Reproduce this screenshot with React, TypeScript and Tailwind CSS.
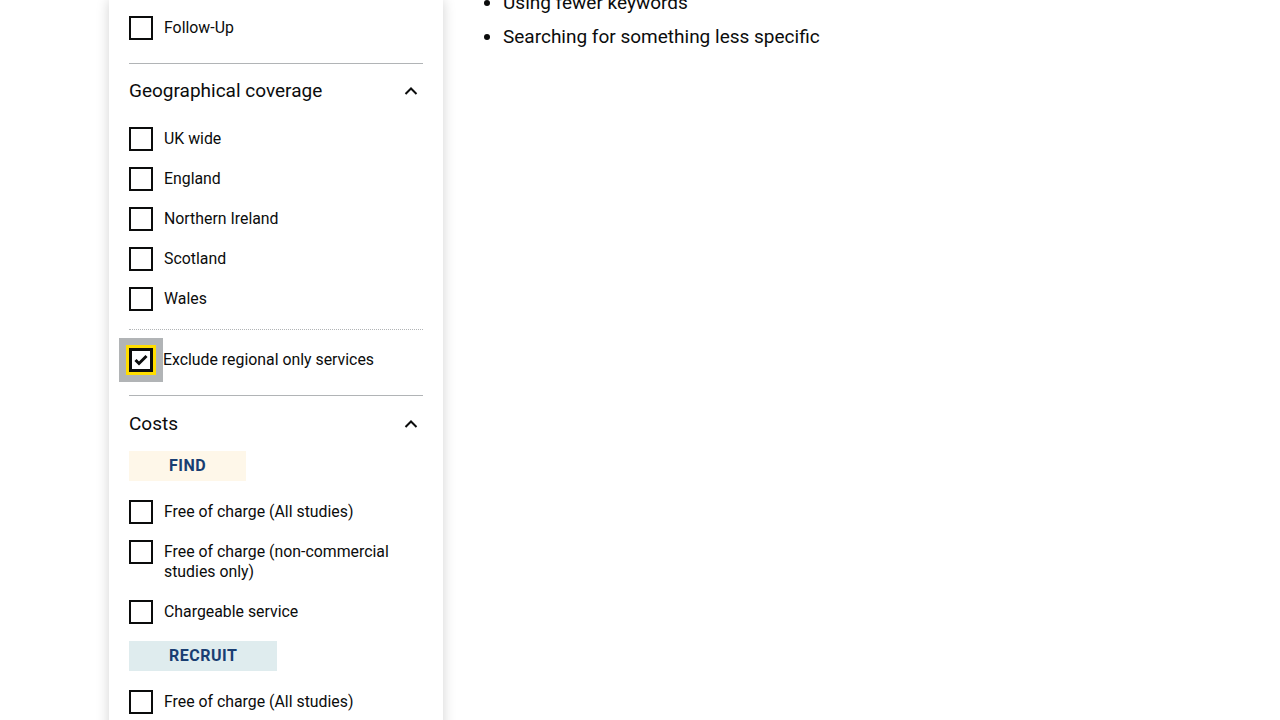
import React from "react";

const font = { fontFamily: "Roboto, 'Liberation Sans', sans-serif" };

const Box = ({ label }: { label: string }) => (
  <label className="flex items-start gap-[11px] text-[15.85px] leading-[20px] text-[#0b0c0c]">
    <span className="block w-6 h-6 flex-shrink-0 border-2 border-[#0b0c0c] bg-white" />
    <span className="pt-[2px] pb-[2px]">{label}</span>
  </label>
);

const Chevron = () => (
  <svg width="18" height="18" viewBox="0 0 18 18" className="mr-[3px]">
    <path d="M3.5 12 L9 6.5 L14.5 12" fill="none" stroke="#0b0c0c" strokeWidth="2" />
  </svg>
);

const Heading = ({ title }: { title: string }) => (
  <div className="flex items-center justify-between text-[19px] leading-[28px] text-[#0b0c0c]">
    <span>{title}</span>
    <Chevron />
  </div>
);

const Tag = ({ text, bg }: { text: string; bg: string }) => (
  <div className={`${bg} h-[30px] flex items-center px-10 self-start font-bold text-[16px] tracking-[0.5px] text-[#193e72]`}>
    {text}
  </div>
);

export default function App() {
  return (
    <div className="min-h-screen bg-white flex" style={font}>
      <aside className="ml-[109px] w-[334px] flex-shrink-0 bg-white shadow-[0_0_12px_rgba(0,0,0,0.18)] px-5 pt-4 pb-10">
        <Box label="Follow-Up" />
        <div className="mt-[23px] border-t border-[#b1b4b6]" />

        <div className="mt-[13px]">
          <Heading title="Geographical coverage" />
        </div>
        <div className="mt-[22px] flex flex-col gap-4">
          {["UK wide", "England", "Northern Ireland", "Scotland", "Wales"].map((l) => (
            <Box key={l} label={l} />
          ))}
        </div>
        <div className="mt-[18px] border-t border-dotted border-[#b1b4b6]" />

        <div className="mt-2 flex items-center">
          <div className="-ml-[10px] w-11 h-11 bg-[#b1b4b6] flex items-center justify-center flex-shrink-0">
            <span className="w-6 h-6 border-[3px] border-[#0b0c0c] bg-white ring-[3px] ring-[#ffdd00] flex items-center justify-center">
              <svg width="14" height="12" viewBox="0 0 14 12">
                <path d="M1.5 6 L5 9.5 L12.5 2" fill="none" stroke="#0b0c0c" strokeWidth="3" />
              </svg>
            </span>
          </div>
          <span className="text-[15.85px] leading-[20px] text-[#0b0c0c]">Exclude regional only services</span>
        </div>
        <div className="mt-[13px] border-t border-[#b1b4b6]" />

        <div className="mt-[14px]">
          <Heading title="Costs" />
        </div>
        <div className="mt-[13px] flex flex-col">
          <Tag text="FIND" bg="bg-[#fef7e9]" />
          <div className="mt-[19px] flex flex-col gap-4">
            <Box label="Free of charge (All studies)" />
            <Box label="Free of charge (non-commercial studies only)" />
            <Box label="Chargeable service" />
          </div>
          <div className="mt-[17px] flex flex-col">
            <Tag text="RECRUIT" bg="bg-[#dfecee]" />
          </div>
          <div className="mt-[19px] flex flex-col gap-4">
            <Box label="Free of charge (All studies)" />
            <Box label="Free of charge (non-commercial studies only)" />
            <Box label="Chargeable service" />
          </div>
        </div>
      </aside>

      <main className="ml-10 flex-1 -mt-[14px]">
        <ul className="list-disc pl-5 text-[19px] leading-[34px] text-[#0b0c0c]">
          <li>Using fewer keywords</li>
          <li>Searching for something less specific</li>
        </ul>
      </main>
    </div>
  );
}
